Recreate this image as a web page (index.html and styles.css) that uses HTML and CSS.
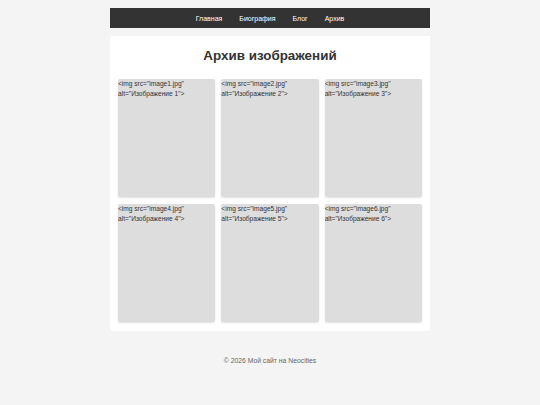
FILE: index.html
```html
<!DOCTYPE html>
<html lang="ru">
<head>
<meta charset="utf-8">
<title>Архив изображений</title>
<link rel="stylesheet" href="styles.css">
</head>
<body>
<div class="wrap">
  <nav class="nav">
    <a href="#">Главная</a>
    <a href="#">Биография</a>
    <a href="#">Блог</a>
    <a href="#">Архив</a>
  </nav>
  <main class="main">
    <h1 class="title">Архив изображений</h1>
    <div class="grid">
      <div class="item">&lt;img src="image1.jpg" alt="Изображение 1"&gt;</div>
      <div class="item">&lt;img src="image2.jpg" alt="Изображение 2"&gt;</div>
      <div class="item">&lt;img src="image3.jpg" alt="Изображение 3"&gt;</div>
      <div class="item">&lt;img src="image4.jpg" alt="Изображение 4"&gt;</div>
      <div class="item">&lt;img src="image5.jpg" alt="Изображение 5"&gt;</div>
      <div class="item">&lt;img src="image6.jpg" alt="Изображение 6"&gt;</div>
    </div>
  </main>
  <footer class="footer">© 2026 Мой сайт на Neocities</footer>
</div>
</body>
</html>
```
FILE: styles.css
```css
html, body {
  margin: 0;
  padding: 0;
}
body {
  background: #f4f4f4;
  font-family: "Liberation Sans", Arial, sans-serif;
  color: #333;
}
.wrap {
  width: 320px;
  margin: 8px auto 0;
}
.nav {
  height: 20px;
  background: #333;
  display: flex;
  justify-content: center;
  align-items: center;
  gap: 17px;
}
.nav a {
  color: #fff;
  text-decoration: none;
  font-size: 7px;
}
.main {
  margin-top: 8px;
  background: #fff;
  border-radius: 2px;
  padding: 10px 8px 9px;
}
.title {
  margin: 0 0 13px;
  font-size: 13.4px;
  line-height: 20px;
  text-align: center;
  color: #333;
  font-weight: bold;
}
.grid {
  display: grid;
  grid-template-columns: repeat(3, 1fr);
  column-gap: 6px;
  row-gap: 7px;
}
.item {
  height: 118px;
  background: #ddd;
  border-radius: 2px;
  box-shadow: 0 1px 2px rgba(0,0,0,0.12);
  font-size: 6.6px;
  line-height: 10px;
  color: #333;
  overflow: hidden;
}
.footer {
  margin-top: 25px;
  text-align: center;
  font-size: 6.8px;
  line-height: 10px;
  color: #666;
}
```
